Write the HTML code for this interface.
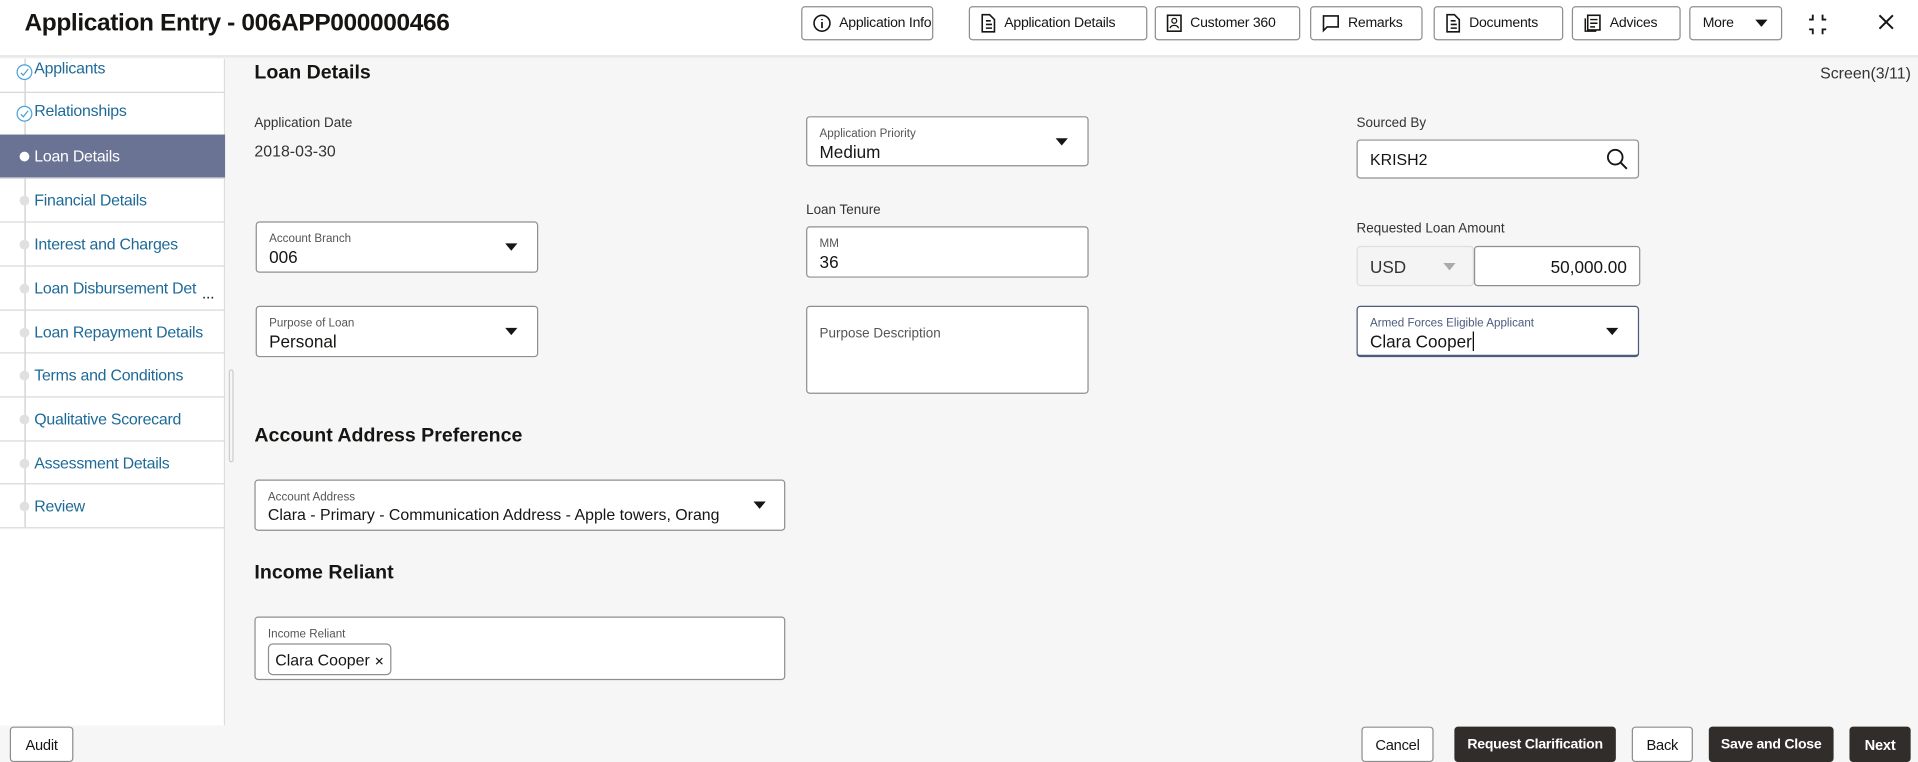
<!DOCTYPE html>
<html><head><meta charset="utf-8"><style>
*{box-sizing:border-box;margin:0;padding:0}
html,body{width:1918px;height:762px;overflow:hidden;background:#f6f6f6}
#w{position:absolute;left:0;top:0;width:1568px;height:623px;transform:scale(1.2232);transform-origin:0 0;font-family:"Liberation Sans",sans-serif;color:#161513;background:#f6f6f6}
.a{position:absolute}
.hdr{left:0;top:0;width:1568px;height:47px;background:#fff;border-bottom:2px solid #e8e8e8}
.title{left:20px;top:8px;font-size:20px;font-weight:bold;letter-spacing:-0.3px}
.btn{position:absolute;top:5px;height:28px;border:1px solid #8d8d8d;border-radius:3px;background:#fff;font-size:11.5px;letter-spacing:-0.2px;display:flex;align-items:center;padding-left:8px;gap:6px;white-space:nowrap;overflow:hidden}
.btn svg{flex-shrink:0}
.side{left:0;top:48px;width:184px;height:545px;background:#fff;border-right:1px solid #ddd}
.it{position:absolute;left:0;width:184px;border-bottom:1px solid #d8d8d8;font-size:13px;color:#1e6a97;padding-left:28px;display:flex;align-items:center;letter-spacing:-0.2px}
.dot{position:absolute;left:16px;width:8px;height:8px;border-radius:50%;background:#e0e0e0}
.ck{position:absolute;left:13px}
.act{background:#6b7394;color:#fff}
.lbl{position:absolute;font-size:11px;color:#333}
.val{position:absolute;font-size:13px;color:#333}
.box{position:absolute;border:1px solid #8f8f8f;border-radius:3px;background:#fff}
.box .l{position:absolute;left:10px;top:8px;font-size:9.5px;color:#555}
.box .v{position:absolute;left:10px;top:20px;font-size:14px;color:#161513;white-space:nowrap}
.tri{position:absolute;width:0;height:0;border-left:5px solid transparent;border-right:5px solid transparent;border-top:6px solid #161513}
h2{position:absolute;font-size:16px;font-weight:bold;left:208px}
.fb{position:absolute;top:594px;height:29px;border:1px solid #8d8d8d;border-radius:3px;background:#fff;font-size:12px;display:flex;align-items:center;justify-content:center;white-space:nowrap;letter-spacing:-0.2px}
.dk{background:#312d2a;color:#fff;border-color:#312d2a;font-weight:bold}
</style></head><body><div id="w">
<div class="a hdr"></div>
<div class="a title">Application Entry - 006APP000000466</div>
<div class="btn" style="left:655px;width:108px"><svg width="16" height="16"><circle cx="8" cy="8" r="6.5" fill="none" stroke="#161513" stroke-width="1.3"/><path d="M8 7v5M8 4.5v1" stroke="#161513" stroke-width="1.4"/></svg>Application Info</div>
<div class="btn" style="left:792px;width:146px"><svg width="14" height="16"><path d="M2 1h6l4 4v10H2z M5 6h4M5 9h5M5 12h5" fill="none" stroke="#161513" stroke-width="1.3"/></svg>Application Details</div>
<div class="btn" style="left:944px;width:119px"><svg width="14" height="16"><rect x="1.5" y="1.5" width="11" height="13" fill="none" stroke="#161513" stroke-width="1.3"/><circle cx="7" cy="6" r="2" fill="none" stroke="#161513"/><path d="M3.5 12c1-3 6-3 7 0" fill="none" stroke="#161513"/></svg>Customer 360</div>
<div class="btn" style="left:1071px;width:92px"><svg width="16" height="16"><path d="M2 2h12v9H5l-3 3z" fill="none" stroke="#161513" stroke-width="1.3"/></svg>Remarks</div>
<div class="btn" style="left:1172px;width:106px"><svg width="14" height="16"><path d="M2 1h6l4 4v10H2z M5 6h4M5 9h5M5 12h5" fill="none" stroke="#161513" stroke-width="1.3"/></svg>Documents</div>
<div class="btn" style="left:1285px;width:89px"><svg width="16" height="16"><rect x="4" y="1.5" width="10" height="12" fill="none" stroke="#161513" stroke-width="1.3"/><path d="M2 4v10.5h9M6 5h6M6 8h6M6 11h4" fill="none" stroke="#161513" stroke-width="1.2"/></svg>Advices</div>
<div class="btn" style="left:1381px;width:76px;gap:18px;padding-left:10px">More<span class="tri" style="position:relative;display:inline-block"></span></div>
<svg class="a" style="left:1476px;top:10px" width="20" height="20"><path d="M6 2v4H3M14 2v4h3M6 18v-4H3M14 18v-4h3" fill="none" stroke="#161513" stroke-width="1.5"/></svg>
<svg class="a" style="left:1535px;top:11px" width="14" height="14"><path d="M1.5 1.5l11 11M12.5 1.5l-11 11" stroke="#161513" stroke-width="1.6"/></svg>

<div class="a side"></div>
<div class="a" style="left:20px;top:48px;width:1px;height:383px;background:#ccc"></div>
<div class="it" style="top:48px;height:28px;align-items:flex-start;padding-top:0"><svg class="ck" style="top:4px" width="14" height="14"><circle cx="7" cy="7" r="6" fill="#fff" stroke="#4aa0d8"/><path d="M4 7.5l2 2 4-5" fill="none" stroke="#4aa0d8"/></svg>Applicants</div>
<div class="it" style="top:76px;height:35px;align-items:flex-start;padding-top:7px"><svg class="ck" style="top:10px" width="14" height="14"><circle cx="7" cy="7" r="6" fill="#fff" stroke="#4aa0d8"/><path d="M4 7.5l2 2 4-5" fill="none" stroke="#4aa0d8"/></svg>Relationships</div>
<div class="it act" style="top:110px;height:36px"><span class="dot" style="top:14px;background:#fff"></span>Loan Details</div>
<div class="it" style="top:146px;height:36px"><span class="dot" style="top:14px"></span>Financial Details</div>
<div class="it" style="top:182px;height:36px"><span class="dot" style="top:14px"></span>Interest and Charges</div>
<div class="it" style="top:218px;height:36px"><span class="dot" style="top:14px"></span>Loan Disbursement Det<span style="position:absolute;left:165px;top:14px;color:#161513">...</span></div>
<div class="it" style="top:254px;height:35px"><span class="dot" style="top:14px"></span>Loan Repayment Details</div>
<div class="it" style="top:289px;height:36px"><span class="dot" style="top:14px"></span>Terms and Conditions</div>
<div class="it" style="top:325px;height:36px"><span class="dot" style="top:14px"></span>Qualitative Scorecard</div>
<div class="it" style="top:361px;height:35px"><span class="dot" style="top:14px"></span>Assessment Details</div>
<div class="it" style="top:396px;height:36px"><span class="dot" style="top:14px"></span>Review</div>
<div class="a" style="left:187px;top:302px;width:4px;height:76px;border:1px solid #ccc;border-radius:2px"></div>

<h2 style="top:51px">Loan Details</h2>
<div class="a" style="left:1488px;top:52px;font-size:13px;color:#333">Screen(3/11)</div>

<div class="lbl" style="left:208px;top:95px">Application Date</div>
<div class="val" style="left:208px;top:116px">2018-03-30</div>
<div class="box" style="left:659px;top:95px;width:231px;height:41px"><span class="l">Application Priority</span><span class="v">Medium</span><span class="tri" style="right:16px;top:17px"></span></div>
<div class="lbl" style="left:1109px;top:95px">Sourced By</div>
<div class="box" style="left:1109px;top:114px;width:231px;height:32px"><span class="v" style="top:8px;font-size:13px">KRISH2</span><svg style="position:absolute;right:8px;top:6px" width="18" height="18"><circle cx="7.5" cy="7.5" r="6" fill="none" stroke="#161513" stroke-width="1.5"/><path d="M12 12l5 5" stroke="#161513" stroke-width="1.6"/></svg></div>

<div class="lbl" style="left:659px;top:166px">Loan Tenure</div>
<div class="box" style="left:209px;top:181px;width:231px;height:42px"><span class="l">Account Branch</span><span class="v">006</span><span class="tri" style="right:16px;top:17px"></span></div>
<div class="box" style="left:659px;top:185px;width:231px;height:42px"><span class="l">MM</span><span class="v">36</span></div>
<div class="lbl" style="left:1109px;top:181px">Requested Loan Amount</div>
<div class="box" style="left:1109px;top:201px;width:96px;height:33px;background:#f4f4f4;border-color:#ddd"><span class="v" style="top:8px;color:#333">USD</span><span class="tri" style="right:14px;top:13px;border-top-color:#aaa"></span></div>
<div class="box" style="left:1205px;top:201px;width:136px;height:33px"><span class="v" style="left:auto;right:10px;top:8px">50,000.00</span></div>

<div class="box" style="left:209px;top:250px;width:231px;height:42px"><span class="l">Purpose of Loan</span><span class="v">Personal</span><span class="tri" style="right:16px;top:17px"></span></div>
<div class="box" style="left:659px;top:250px;width:231px;height:72px"><span class="l" style="top:16px;font-size:11px">Purpose Description</span></div>
<div class="box" style="left:1109px;top:250px;width:231px;height:42px;border:1px solid #4d5a7c;border-width:1px 1px 2px 1px"><span class="l" style="color:#4d5a7c">Armed Forces Eligible Applicant</span><span class="v">Clara Cooper<span style="border-left:1.5px solid #000;margin-left:1px"></span></span><span class="tri" style="right:16px;top:17px"></span></div>

<h2 style="top:348px">Account Address Preference</h2>
<div class="box" style="left:208px;top:392px;width:434px;height:42px"><span class="l">Account Address</span><span class="v" style="font-size:13px">Clara - Primary - Communication Address - Apple towers, Orang</span><span class="tri" style="right:15px;top:17px"></span></div>

<h2 style="top:460px">Income Reliant</h2>
<div class="box" style="left:208px;top:504px;width:434px;height:52px"><span class="l">Income Reliant</span>
<div style="position:absolute;left:10px;top:21px;width:101px;height:26px;border:1px solid #8f8f8f;border-radius:4px;font-size:13px;padding:5px 0 0 5px;white-space:nowrap">Clara Cooper <span style="font-size:10px">✕</span></div></div>

<div class="fb" style="left:8px;width:52px">Audit</div>
<div class="fb" style="left:1113px;width:59px">Cancel</div>
<div class="fb dk" style="left:1189px;width:132px;font-size:11.5px">Request Clarification</div>
<div class="fb" style="left:1334px;width:50px">Back</div>
<div class="fb dk" style="left:1397px;width:102px;font-size:11.5px">Save and Close</div>
<div class="fb dk" style="left:1512px;width:50px">Next</div>
</div></body></html>
